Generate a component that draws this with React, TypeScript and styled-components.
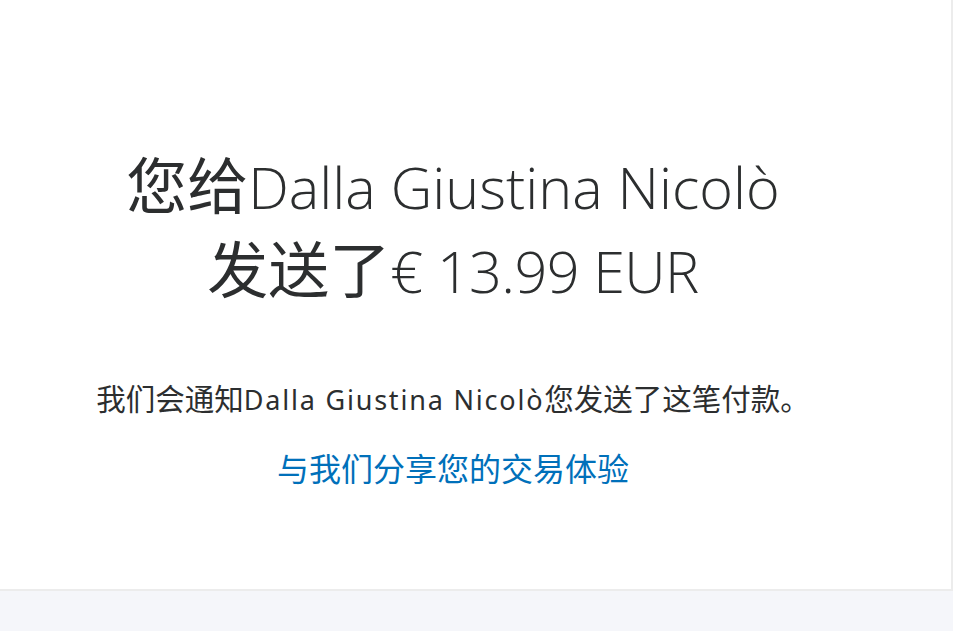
import styled, { createGlobalStyle } from 'styled-components'

const GlobalStyle = createGlobalStyle`
    html, body {
        margin: 0;
        padding: 0;
        background: #f5f6fa;
    }
    body {
        font-family: "Open Sans", "Noto Sans CJK SC", sans-serif;
        color: #2c2e2f;
    }
`

const Page = styled.div`
    min-height: 631px;
    display: flex;
    flex-direction: column;
    background: #f5f6fa;
`

const Panel = styled.section`
    box-sizing: border-box;
    width: 953px;
    height: 591px;
    background: #fff;
    border-right: 2px solid #ececec;
    border-bottom: 2px solid #ececec;
    padding: 143px 45px 0 0;
    display: flex;
    flex-direction: column;
    align-items: center;
    text-align: center;
`

const Heading = styled.h1`
    margin: 0;
    font-family: "Open Sans", "Noto Sans CJK SC", sans-serif;
    font-weight: 300;
    font-size: 57.5px;
    line-height: 80px;
    color: #2c2e2f;
`

const Han = styled.span<{ $size?: number }>`
    font-family: "Noto Sans CJK SC", sans-serif;
    font-weight: 400;
    font-size: ${({ $size }) => ($size ? `${$size}px` : 'inherit')};
`

const Amount = styled.span`
    letter-spacing: -0.6px;
`

const Note = styled.p`
    margin: 68px 0 0;
    font-family: "Noto Sans", "Noto Sans CJK SC", sans-serif;
    font-size: 29.5px;
    line-height: 40px;
    color: #2c2e2f;
`

const Name = styled.span`
    font-size: 27px;
    letter-spacing: 1.8px;
`

const FeedbackLink = styled.a`
    margin-top: 29px;
    font-family: "Noto Sans", "Noto Sans CJK SC", sans-serif;
    font-size: 32px;
    line-height: 40px;
    color: #0070ba;
    text-decoration: none;
    cursor: pointer;
`

export default function App() {
    return (
        <Page>
            <GlobalStyle />
            <Panel>
                <Heading>
                    <Han $size={61}>您给</Han>Dalla Giustina Nicolò
                    <br />
                    <Han $size={61}>发送了</Han>
                    <Amount>€ 13.99 EUR</Amount>
                </Heading>
                <Note>
                    我们会通知<Name>Dalla Giustina Nicolò</Name>您发送了这笔付款。
                </Note>
                <FeedbackLink>与我们分享您的交易体验</FeedbackLink>
            </Panel>
        </Page>
    )
}
